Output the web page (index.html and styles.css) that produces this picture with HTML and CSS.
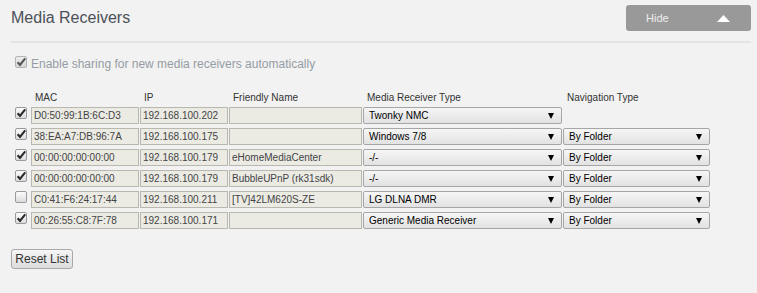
FILE: index.html
```html
<!DOCTYPE html>
<html lang="en">
<head>
    <meta charset="UTF-8">
    <title>Media Receivers</title>
    <link rel="stylesheet" href="styles.css">
</head>
<body>
    <div class="page">
        <div class="top-bar">
            <h1 class="title">Media Receivers</h1>
            <button class="hide-button">
                <span>Hide</span>
                <svg class="caret" width="13" height="7" viewBox="0 0 13 7"><polygon points="0,7 13,7 6.5,0" fill="#fff"/></svg>
            </button>
        </div>

        <div class="auto-share">
            <span class="check muted"><svg viewBox="0 0 12 12"><path d="M2.6 6.2 L5 8.8 L10.2 2.4"/></svg></span>
            <span class="auto-share-label">Enable sharing for new media receivers automatically</span>
        </div>

        <div class="receivers">
            <div></div>
            <div class="col-head">MAC</div>
            <div class="col-head">IP</div>
            <div class="col-head">Friendly Name</div>
            <div class="col-head">Media Receiver Type</div>
            <div class="col-head">Navigation Type</div>

            <div class="check-cell"><span class="check"><svg viewBox="0 0 12 12"><path d="M2.6 6.2 L5 8.8 L10.2 2.4"/></svg></span></div>
            <div class="field">D0:50:99:1B:6C:D3</div>
            <div class="field">192.168.100.202</div>
            <div class="field"></div>
            <div class="select"><span>Twonky NMC</span><i class="arrow"></i></div>
            <div></div>

            <div class="check-cell"><span class="check"><svg viewBox="0 0 12 12"><path d="M2.6 6.2 L5 8.8 L10.2 2.4"/></svg></span></div>
            <div class="field">38:EA:A7:DB:96:7A</div>
            <div class="field">192.168.100.175</div>
            <div class="field"></div>
            <div class="select"><span>Windows 7/8</span><i class="arrow"></i></div>
            <div class="select"><span>By Folder</span><i class="arrow"></i></div>

            <div class="check-cell"><span class="check"><svg viewBox="0 0 12 12"><path d="M2.6 6.2 L5 8.8 L10.2 2.4"/></svg></span></div>
            <div class="field">00:00:00:00:00:00</div>
            <div class="field">192.168.100.179</div>
            <div class="field">eHomeMediaCenter</div>
            <div class="select"><span>-/-</span><i class="arrow"></i></div>
            <div class="select"><span>By Folder</span><i class="arrow"></i></div>

            <div class="check-cell"><span class="check"><svg viewBox="0 0 12 12"><path d="M2.6 6.2 L5 8.8 L10.2 2.4"/></svg></span></div>
            <div class="field">00:00:00:00:00:00</div>
            <div class="field">192.168.100.179</div>
            <div class="field">BubbleUPnP (rk31sdk)</div>
            <div class="select"><span>-/-</span><i class="arrow"></i></div>
            <div class="select"><span>By Folder</span><i class="arrow"></i></div>

            <div class="check-cell"><span class="check"></span></div>
            <div class="field">C0:41:F6:24:17:44</div>
            <div class="field">192.168.100.211</div>
            <div class="field">[TV]42LM620S-ZE</div>
            <div class="select"><span>LG DLNA DMR</span><i class="arrow"></i></div>
            <div class="select"><span>By Folder</span><i class="arrow"></i></div>

            <div class="check-cell"><span class="check"><svg viewBox="0 0 12 12"><path d="M2.6 6.2 L5 8.8 L10.2 2.4"/></svg></span></div>
            <div class="field">00:26:55:C8:7F:78</div>
            <div class="field">192.168.100.171</div>
            <div class="field"></div>
            <div class="select"><span>Generic Media Receiver</span><i class="arrow"></i></div>
            <div class="select"><span>By Folder</span><i class="arrow"></i></div>
        </div>

        <button class="reset-button">Reset List</button>
    </div>
</body>
</html>
```

FILE: styles.css
```css
body {
    margin: 0;
    background: #f2f2f2;
    font-family: "Liberation Sans", Arial, sans-serif;
}
.page {
    padding: 5px 6px 0 11px;
}
.top-bar {
    display: flex;
    justify-content: space-between;
    align-items: flex-start;
    padding-bottom: 10px;
    border-bottom: 2px solid #e4e4e4;
}
.title {
    margin: 0;
    font-size: 16px;
    font-weight: normal;
    line-height: 26px;
    color: #4b5058;
}
.hide-button {
    width: 125px;
    height: 26px;
    padding: 0 21px 0 20px;
    display: flex;
    justify-content: space-between;
    align-items: center;
    background: #999;
    border: none;
    border-radius: 3px;
    color: #eee;
    font-family: inherit;
    font-size: 11px;
    cursor: pointer;
}
.caret {
    display: block;
    margin-top: 1px;
}
.auto-share {
    display: flex;
    align-items: flex-start;
    margin-top: 13px;
    padding-left: 4px;
}
.auto-share-label {
    margin-left: 4px;
    margin-top: 1px;
    font-size: 12px;
    line-height: 14px;
    color: #959ca4;
}
.check {
    display: block;
    width: 12px;
    height: 12px;
    box-sizing: border-box;
    border: 1px solid #9a9a9a;
    border-radius: 2px;
    background: linear-gradient(#fcfcfc, #dcdcdc);
}
.check svg {
    display: block;
    width: 12px;
    height: 12px;
    margin: -1px 0 0 -1px;
    fill: none;
    stroke: #2a2a2a;
    stroke-width: 2.1;
}
.check.muted {
    border-color: #b4b4b4;
    background: linear-gradient(#eee, #d6d6d6);
}
.check.muted svg {
    stroke: #555;
}
.receivers {
    display: grid;
    grid-template-columns: 19px 108px 88px 133px 199px 147px;
    grid-auto-rows: 17px;
    grid-template-rows: 11px;
    column-gap: 1px;
    row-gap: 4px;
    margin-top: 21px;
    font-size: 10px;
}
.col-head {
    padding-left: 4px;
    line-height: 11px;
    color: #333;
    white-space: nowrap;
}
.check-cell {
    padding-left: 4px;
}
.field {
    box-sizing: border-box;
    height: 17px;
    padding: 0 2px;
    line-height: 15px;
    border: 1px solid #b8b8b0;
    background: #ebebe4;
    color: #444;
    white-space: nowrap;
    overflow: hidden;
}
.select {
    box-sizing: border-box;
    height: 17px;
    padding: 0 7px 0 5px;
    display: flex;
    justify-content: space-between;
    align-items: center;
    border: 1px solid #a6a6a6;
    border-radius: 2px;
    background: linear-gradient(#f6f6f6, #e2e2e2);
    color: #000;
}
.arrow {
    width: 0;
    height: 0;
    border-left: 3px solid transparent;
    border-right: 3px solid transparent;
    border-top: 6px solid #000;
}
.reset-button {
    margin-top: 20px;
    width: 62px;
    height: 20px;
    padding: 0;
    font-family: inherit;
    font-size: 12px;
    color: #333;
    border: 1px solid #a9a9a9;
    border-radius: 3px;
    background: linear-gradient(#f6f6f6, #dcdcdc);
    cursor: pointer;
}
```
